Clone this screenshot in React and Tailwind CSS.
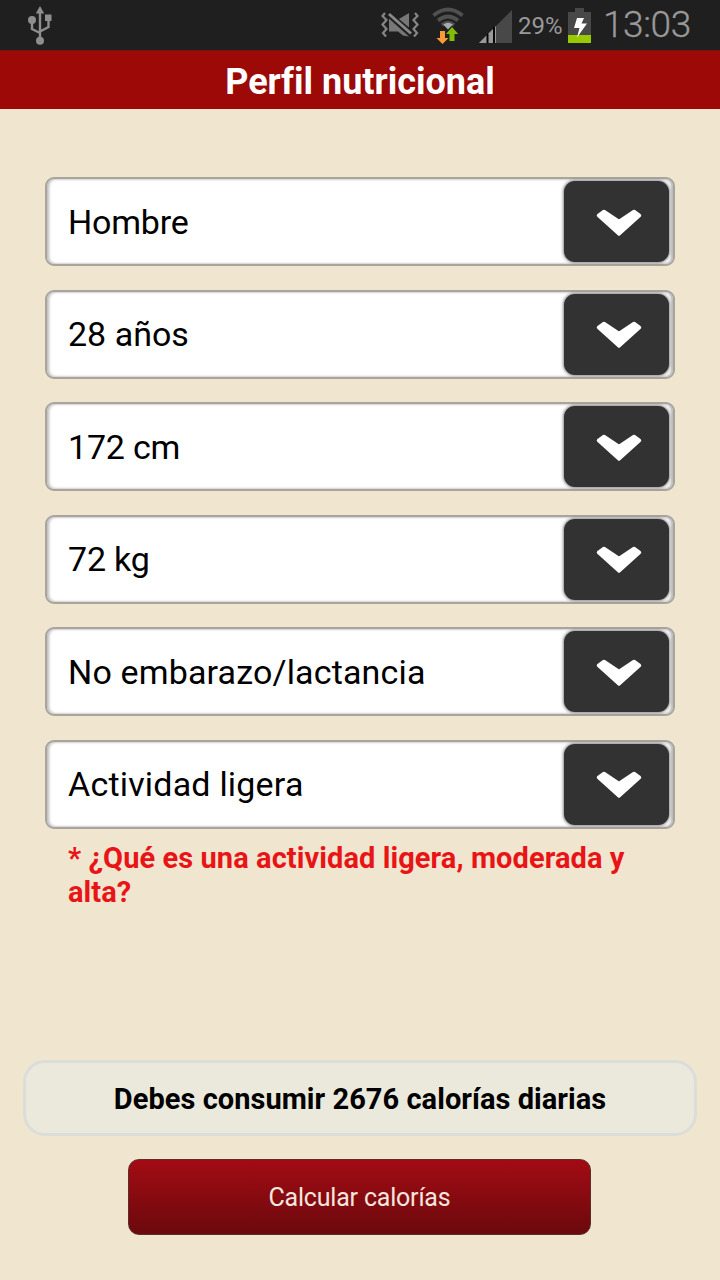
const fields = [
  { label: 'Hombre', tracking: 'tracking-[-0.200px]' },
  { label: '28 años', tracking: 'tracking-[0px]' },
  { label: '172 cm', tracking: 'tracking-[-0.200px]' },
  { label: '72 kg', tracking: 'tracking-[-0.200px]' },
  { label: 'No embarazo/lactancia', tracking: 'tracking-[0.150px]' },
  { label: 'Actividad ligera', tracking: 'tracking-[0.200px]' },
];

function UsbIcon() {
  return (
    <svg className="h-10 w-7" viewBox="0 0 28 40" fill="#8e8e8e">
      <path d="M14 1 18.2 8.5H9.8Z" />
      <path d="M14 7V35M14 28 6 24V15M14 26.5 22.5 22V13" fill="none" stroke="#8e8e8e" strokeWidth="2.4" />
      <circle cx="6" cy="15" r="4" />
      <rect x="19" y="9.5" width="6.5" height="6.5" />
      <circle cx="14" cy="35.8" r="4" />
    </svg>
  );
}

function MutedIcon() {
  return (
    <svg className="h-7 w-[38px]" viewBox="0 0 38 28">
      <path d="M4 2 1.5 5 5.5 9 1.5 13.5 5.5 18 2 22 5 25.5M34 2 36.5 5 32.5 9 36.5 13.5 32.5 18 36 22 33 25.5" fill="none" stroke="#858585" strokeWidth="2.200" />
      <path d="M16 8H18L28 2V17ZM8 7.500 28 25.500 22 24.500 17 20.500H8Z" fill="#777" />
      <path d="M8 3 30 21.500" stroke="#1f1f1f" strokeWidth="5" />
      <path d="M8 3 30 22.500" stroke="#888" strokeWidth="3" />
    </svg>
  );
}

function WifiIcon() {
  return (
    <svg className="h-[38px] w-8" viewBox="0 0 32 38">
      <g fill="none" stroke="#505050" strokeWidth="4">
        <path d="M1.5 8.5Q16 -3.5 30.5 8.5" />
        <path d="M6 13.5Q16 5.5 26 13.5" />
        <path d="M10 18Q16 13.5 22 18" />
      </g>
      <path d="M11.3 17.5Q16 14 20.8 17.5L16 22.5Z" fill="#aaa" />
      <path d="M8 24H13V31H16.500L10.500 37 4.500 31H8Z" fill="#f89b35" />
      <path d="M20 20 26.200 27H22.500V34H17.500V27H14Z" fill="#80bd08" />
    </svg>
  );
}

function SignalIcon() {
  return (
    <svg className="h-[33px] w-[33px]" viewBox="0 0 33 33">
      <path d="M0 33 33 0V33Z" fill="#484848" />
      <path d="M0 33 17 16V33Z" fill="#999" />
      <path d="M8.500 24V33M15 17V33" stroke="#050505" strokeWidth="2" />
    </svg>
  );
}

function BatteryIcon() {
  return (
    <svg className="h-[35px] w-[23px]" viewBox="0 0 23 35">
      <path d="M7 0H16V4H23V35H0V4H7Z" fill="#484848" />
      <path d="M0 27H23V35H0Z" fill="#99c900" />
      <path d="M9 10H16L13.500 15.500H19L9 29.500 11.500 20H6Z" fill="#fff" />
    </svg>
  );
}

function SelectField({ label, tracking }) {
  return (
    <button className="flex h-[89px] w-full items-center justify-between rounded-[9px] border-2 border-[#a9a49c] bg-white pr-[4px] pl-[21px] text-left shadow-[inset_2px_0_3px_#bbb,inset_-2px_0_2px_#bbb]">
      <span className={`text-[34px] leading-10 whitespace-nowrap text-black ${tracking}`}>{label}</span>
      <span className="flex h-[81px] w-[105px] items-center justify-center rounded-[11px] bg-[#323232] pl-[5px] shadow-[0_0_3px_1px_#888]">
        <svg className="h-[30px] w-12" viewBox="0 0 48 30">
          <path d="M3.500 8.500 9 4.500 24 14.500 39 4.500 44.500 8.500 24 27Z" fill="#fff" stroke="#fff" strokeWidth="3.500" strokeLinejoin="round" />
        </svg>
      </span>
    </button>
  );
}

export default function App() {
  return (
    <main className="flex h-[1280px] w-[720px] flex-col overflow-hidden bg-[#f0e6d0] font-['Roboto',sans-serif] [font-variant-ligatures:none]">
      <div className="flex h-[50px] shrink-0 items-center bg-[#1f1f1f] pr-[29px] pl-[26px] text-[#999]">
        <UsbIcon />
        <div className="ml-auto flex items-center">
          <MutedIcon />
          <div className="ml-[13px] pt-0.5"><WifiIcon /></div>
          <div className="ml-[15px] pt-0.5"><SignalIcon /></div>
          <span className="ml-[6px] w-[44px] pt-0.5 text-[24px] leading-[48px] whitespace-nowrap">29%</span>
          <div className="ml-[6px]"><BatteryIcon /></div>
          <span className="ml-[12px] w-[88px] text-[37px] leading-[50px] font-light tracking-[-0.400px] whitespace-nowrap [-webkit-text-stroke:0.300px_#999]">13:03</span>
        </div>
      </div>
      <header className="flex h-[59px] shrink-0 items-center justify-center border-t border-[#75140f] bg-[#9c0907] pt-1">
        <h1 className="text-[36px] leading-10 font-bold whitespace-nowrap text-white">Perfil nutricional</h1>
      </header>
      <section className="mt-[68px] flex flex-col gap-[23.500px] px-[45px]">
        {fields.map((field) => <SelectField key={field.label} {...field} />)}
      </section>
      <p className="mt-[12px] px-[68px] text-[29px] leading-[34px] font-bold tracking-[0.080px] whitespace-nowrap text-[#e81416]">
        * ¿Qué es una actividad ligera, moderada y<br />alta?
      </p>
      <div className="mt-auto mb-[45px] flex flex-col items-center gap-[23px]">
        <div className="flex h-[76px] w-[674px] items-center justify-center rounded-[22px] border-3 border-[#dcdcd9] bg-[#ebe9dc] pt-0.5 text-[29px] leading-8 font-bold tracking-[0.040px] text-black">
          <span className="whitespace-nowrap">Debes consumir 2676 calorías diarias</span>
        </div>
        <button className="mr-px flex h-[76px] w-[463px] items-center justify-center rounded-[11px] border border-[#5c2e2b] bg-linear-to-b from-[#a30b13] to-[#6b090d] pt-0.5 text-[25px] leading-8 tracking-[-0.200px] text-[#f3e5df]">
          <span className="whitespace-nowrap">Calcular calorías</span>
        </button>
      </div>
    </main>
  );
}
